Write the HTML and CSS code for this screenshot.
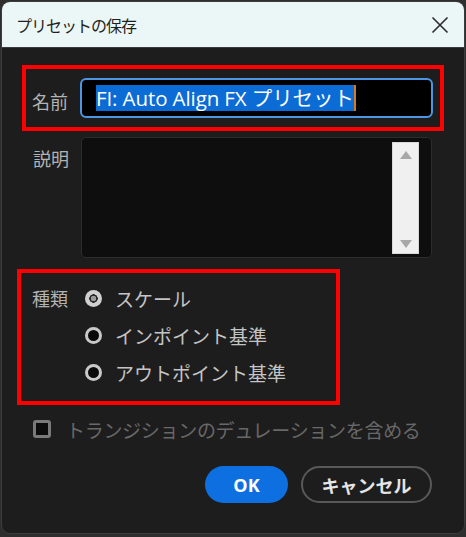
FILE: index.html
```html
<!DOCTYPE html>
<html lang="ja">
<head>
<meta charset="utf-8">
<title>プリセットの保存</title>
<link rel="stylesheet" href="styles.css">
</head>
<body>
<div class="window">
  <div class="titlebar">
    <span class="title">プリセットの保存</span>
    <svg class="close" width="18" height="18" viewBox="0 0 18 18"><path d="M1.5 1.5 L16.5 16.5 M16.5 1.5 L1.5 16.5" stroke="#2b2b2b" stroke-width="1.6" fill="none"/></svg>
  </div>
  <div class="content">
    <div class="hl hl-name">
      <span class="label">名前</span>
      <div class="name-input"><span class="sel">FI: Auto Align FX プリセット</span><span class="caret"></span></div>
    </div>
    <div class="desc-row">
      <span class="label">説明</span>
      <div class="desc-box">
        <div class="scrollbar">
          <span class="arrow up"></span>
          <span class="arrow down"></span>
        </div>
      </div>
    </div>
    <div class="hl hl-type">
      <span class="label">種類</span>
      <div class="radios">
        <div class="radio-row"><span class="radio checked"></span><span>スケール</span></div>
        <div class="radio-row"><span class="radio"></span><span>インポイント基準</span></div>
        <div class="radio-row"><span class="radio"></span><span>アウトポイント基準</span></div>
      </div>
    </div>
    <div class="check-row">
      <span class="checkbox"></span>
      <span>トランジションのデュレーションを含める</span>
    </div>
    <div class="buttons">
      <span class="btn ok">OK</span>
      <span class="btn cancel">キャンセル</span>
    </div>
  </div>
</div>
</body>
</html>
```
FILE: styles.css
```css
html, body {
  margin: 0;
  padding: 0;
  background: #2e2e2e;
  width: 466px;
  height: 537px;
  overflow: hidden;
}
body {
  font-family: "Noto Sans CJK JP", "Noto Sans", sans-serif;
}
.window {
  margin: 1px 0 0 1px;
  width: 462px;
  height: 531px;
  border: 1px solid #3c3c3c;
  border-radius: 9px;
  background: #1d1d1d;
  overflow: hidden;
}
.titlebar {
  height: 46px;
  background: #ebf7f6;
  display: flex;
  align-items: center;
  justify-content: space-between;
  padding: 0 15px 0 14px;
  border-bottom: 1px solid #3a3a3a;
  box-sizing: border-box;
}
.title {
  font-size: 16px;
  color: #1f1f1f;
  letter-spacing: -1px;
}
.close {
  display: block;
}
.content {
  display: flex;
  flex-direction: column;
}
.label {
  font-size: 18px;
  color: #b3b3b3;
  width: 48px;
  flex: none;
}
.hl {
  border: 4px solid #ff0000;
  box-sizing: border-box;
  display: flex;
}
.hl-name {
  margin: 17px 0 0 20px;
  width: 422px;
  height: 66px;
  align-items: center;
  padding: 0 0 0 6px;
}
.hl-name .label {
  padding-top: 6px;
}
.name-input {
  width: 353px;
  height: 40px;
  box-sizing: border-box;
  border: 2px solid #4d96e3;
  border-radius: 6px;
  background: #000;
  display: flex;
  align-items: center;
  padding-left: 14px;
}
.sel {
  background: #0b6cd6;
  color: #ffffff;
  font-family: "Open Sans", "Noto Sans CJK JP", sans-serif;
  font-size: 20.5px;
  line-height: 26px;
  white-space: nowrap;
  letter-spacing: -0.1px;
}
.caret {
  width: 2px;
  height: 26px;
  background: #d27a2a;
}
.desc-row {
  display: flex;
  margin: 6px 0 0 31px;
}
.desc-row .label {
  padding-top: 8px;
}
.desc-box {
  width: 351px;
  height: 121px;
  box-sizing: border-box;
  border: 1px solid #2c2c2c;
  border-radius: 5px;
  background: #0e0e0e;
  display: flex;
  justify-content: flex-end;
  padding: 4px 12px 3px 0;
}
.scrollbar {
  width: 27px;
  background: #f0f0f0;
  border: 1px solid #d8d8d8;
  box-sizing: border-box;
  display: flex;
  flex-direction: column;
  justify-content: space-between;
  align-items: center;
  padding: 8px 0 5px;
}
.arrow {
  width: 0;
  height: 0;
  border-left: 6px solid transparent;
  border-right: 6px solid transparent;
}
.arrow.up {
  border-bottom: 8px solid #a8a8a8;
}
.arrow.down {
  border-top: 8px solid #a8a8a8;
}
.hl-type {
  margin: 11px 0 0 15px;
  width: 323px;
  height: 136px;
  padding: 12px 0 0 11px;
}
.hl-type .label {
  width: 52px;
}
.radios {
  display: flex;
  flex-direction: column;
  gap: 11px;
}
.radio-row {
  display: flex;
  align-items: center;
  gap: 13px;
  height: 26px;
  font-size: 19px;
  color: #c4c4c4;
}
.radio {
  width: 17px;
  height: 17px;
  box-sizing: border-box;
  border-radius: 50%;
  border: 3px solid #c9c9c9;
  background: #0a0a0a;
  flex: none;
  margin-left: 1px;
}
.radio.checked {
  border: none;
  background: radial-gradient(circle, #9a9a9a 0 2.5px, #2a2a2a 3px 4px, #d0d0d0 4.5px);
}
.check-row {
  margin: 12px 0 0 31px;
  display: flex;
  align-items: center;
  gap: 15px;
  height: 24px;
  font-size: 19px;
  color: #686868;
  letter-spacing: -0.3px;
}
.checkbox {
  width: 18px;
  height: 18px;
  box-sizing: border-box;
  border: 3px solid #7a7a7a;
  border-radius: 3px;
  background: #0c0c0c;
  flex: none;
}
.buttons {
  display: flex;
  justify-content: flex-end;
  gap: 13px;
  margin: 25px 32px 0 0;
}
.btn {
  height: 37px;
  box-sizing: border-box;
  border-radius: 19px;
  display: flex;
  align-items: center;
  justify-content: center;
  font-weight: bold;
  font-size: 18px;
}
.ok {
  width: 83px;
  background: #0e6fe0;
  color: #fff;
  font-family: "Open Sans", "Noto Sans", sans-serif;
}
.cancel {
  width: 131px;
  border: 2px solid #585858;
  color: #e6e6e6;
}
```
